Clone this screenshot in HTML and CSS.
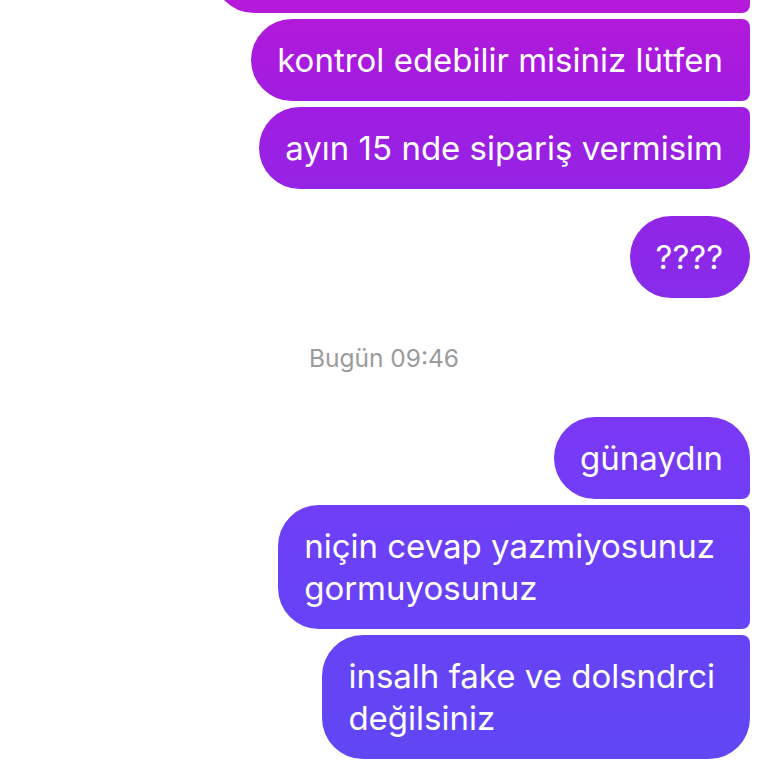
FILE: index.html
```html
<!DOCTYPE html>
<html lang="tr">
<head>
    <meta charset="UTF-8">
    <meta name="viewport" content="width=device-width, initial-scale=1.0">
    <title>Mesajlar</title>
    <link rel="stylesheet" href="styles.css">
</head>
<body>
    <div class="thread">
        <div class="group">
            <div class="bubble first bubble-cut"></div>
            <div class="bubble">kontrol edebilir misiniz lütfen</div>
            <div class="bubble last">ayın 15 nde sipariş vermisim</div>
        </div>

        <div class="group">
            <div class="bubble single">????</div>
        </div>

        <div class="timestamp">Bugün 09:46</div>

        <div class="group">
            <div class="bubble first">günaydın</div>
            <div class="bubble wide">niçin cevap yazmiyosunuz<br>gormuyosunuz</div>
            <div class="bubble last wide">insalh fake ve dolsndrci<br>değilsiniz</div>
        </div>
    </div>
</body>
</html>
```

FILE: styles.css
```css
* {
    margin: 0;
    padding: 0;
    box-sizing: border-box;
}

body {
    background: #ffffff;
    font-family: Inter, "Noto Sans", sans-serif;
    overflow: hidden;
}

.thread {
    display: flex;
    flex-direction: column;
    padding: 0 18px 0 18px;
    margin-top: -69px;
}

.group {
    display: flex;
    flex-direction: column;
    align-items: flex-end;
    gap: 6px;
    margin-bottom: 27px;
}

.bubble {
    background: linear-gradient(180deg, #b619d9 0%, #a21ce0 12%, #8c28e8 33%, #7a38f5 56%, #6c40f8 70%, #6047f4 100%);
    background-attachment: fixed;
    color: #ffffff;
    font-size: 33px;
    line-height: 42px;
    padding: 20px 27px 20px 26px;
    border-radius: 41px 8px 8px 41px;
    white-space: nowrap;
}

.bubble.first {
    border-top-right-radius: 41px;
}

.bubble.last {
    border-bottom-right-radius: 41px;
}

.bubble.single {
    border-radius: 41px;
}

.bubble.wide {
    padding-right: 35px;
}

.bubble-cut {
    width: 537px;
    height: 82px;
}

.timestamp {
    text-align: center;
    color: #9b9b9b;
    font-size: 24.5px;
    line-height: 30px;
    padding: 18px 0 44px;
}
```
